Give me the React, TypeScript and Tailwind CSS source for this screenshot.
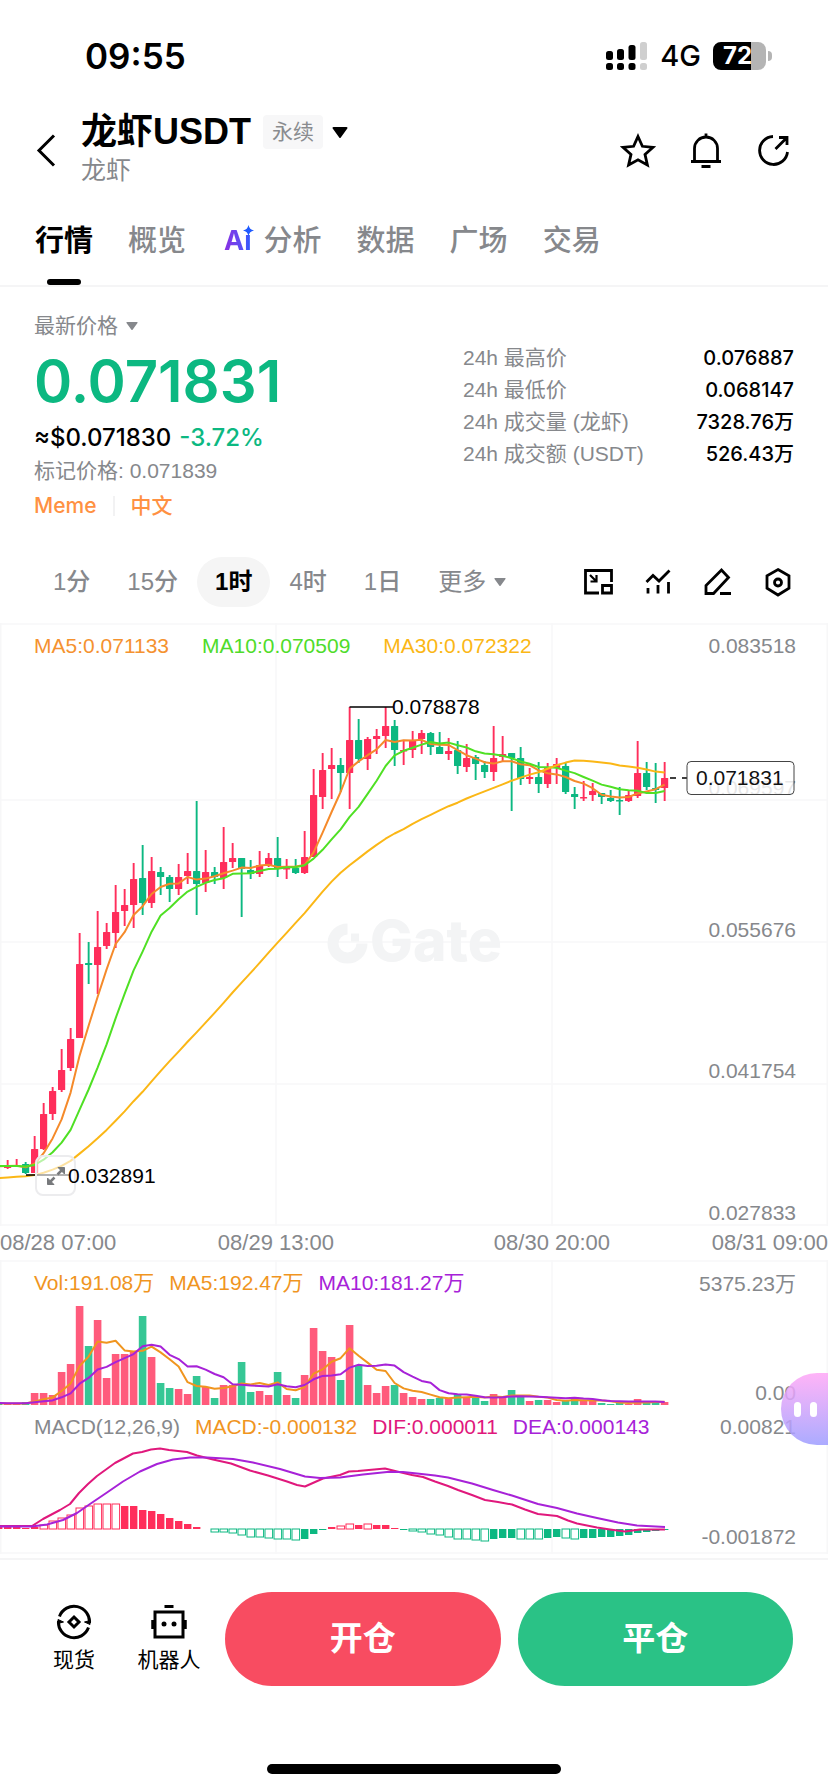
import type { ReactNode } from "react";

type Candle = { high: number; top: number; bottom: number; low: number; up: boolean };

const RED = "#ff2e5b";
const GREEN = "#0cb881";
const GRID = "#f7f7f8";
const STEP = 9;

// high, body top, body bottom, low, direction (1 = up)
const rawCandles: [number, number, number, number, 0 | 1][] = [
  [542, 542, 544, 544, 0], [537, 542, 545, 546, 1], [536, 542, 543, 543, 1], [539, 541, 550, 551, 0],
  [513, 526, 550, 550, 1], [480, 491, 526, 527, 1], [464, 468, 491, 497, 1], [426, 447, 467, 469, 1],
  [405, 416, 445, 448, 1], [310, 341, 415, 415, 1], [319, 340, 342, 361, 0], [288, 324, 342, 371, 1],
  [300, 309, 323, 326, 1], [262, 289, 310, 325, 1], [266, 282, 288, 303, 1], [240, 256, 282, 305, 1],
  [222, 255, 280, 292, 0], [234, 248, 280, 285, 1], [244, 249, 254, 272, 0], [252, 254, 266, 279, 0],
  [241, 254, 266, 272, 1], [230, 248, 253, 261, 1], [178, 248, 261, 292, 0], [227, 249, 260, 269, 1],
  [244, 249, 254, 261, 0], [204, 239, 255, 266, 1], [220, 235, 239, 245, 1], [235, 235, 246, 294, 0],
  [237, 247, 251, 256, 0], [228, 242, 251, 254, 1], [230, 235, 243, 244, 1], [214, 235, 246, 254, 0],
  [236, 245, 246, 256, 1], [236, 245, 250, 251, 0], [208, 234, 250, 251, 1], [146, 172, 234, 234, 1],
  [130, 147, 174, 186, 1], [125, 142, 146, 176, 1], [135, 142, 150, 169, 0], [84, 117, 150, 186, 1],
  [96, 117, 136, 140, 0], [114, 116, 136, 147, 1], [106, 113, 116, 131, 1], [84, 103, 113, 125, 1],
  [97, 103, 127, 143, 0], [117, 127, 128, 142, 1], [108, 117, 127, 135, 1], [107, 110, 116, 131, 1],
  [109, 110, 124, 132, 0], [109, 124, 131, 131, 0], [115, 128, 131, 137, 1], [118, 127, 143, 151, 0],
  [121, 135, 144, 149, 1], [132, 134, 141, 157, 0], [138, 142, 149, 155, 0], [103, 135, 149, 158, 1],
  [113, 131, 134, 139, 1], [130, 130, 135, 188, 0], [124, 135, 156, 162, 0], [145, 154, 156, 161, 1],
  [139, 154, 161, 170, 0], [140, 145, 161, 165, 1], [135, 141, 145, 161, 1], [139, 143, 169, 171, 0],
  [164, 171, 174, 186, 0], [158, 174, 175, 178, 1], [160, 168, 172, 178, 1], [170, 170, 174, 181, 0],
  [167, 175, 178, 179, 0], [164, 177, 178, 192, 0], [168, 172, 178, 179, 1], [118, 150, 173, 175, 1],
  [139, 150, 164, 167, 0], [140, 165, 167, 180, 0], [139, 155, 165, 178, 1],
];

const candles: Candle[] = rawCandles.map(([high, top, bottom, low, up]) => ({
  high, top, bottom, low, up: up === 1,
}));

const volumes = [
  1, 1, 1, 3, 12, 12, 10, 33, 41, 99, 59, 85, 27, 51, 51, 53, 89, 48, 22, 17, 16, 11, 29, 18, 7, 20, 20, 43, 13, 14,
  10, 33, 10, 7, 30, 77, 54, 48, 25, 80, 39, 20, 12, 19, 20, 12, 8, 6, 6, 7, 7, 11, 8, 8, 4, 11, 9, 15, 8, 4, 5, 5, 3,
  4, 8, 4, 4, 2, 1, 2, 1, 6, 3, 3, 3,
];

const histogram = [
  3, 3, 2, 1, 2, 4, 8, 11, 14, 21, 23, 25, 25, 25, 23, 23, 19, 18, 15, 11, 8, 5, 2, 0, -3, -3, -4, -6, -8, -8, -9, -10,
  -10, -11, -10, -5, -1, 2, 3, 5, 4, 5, 4, 4, 1, -1, -2, -3, -5, -6, -8, -10, -10, -11, -12, -10, -9, -9, -10, -10, -10,
  -9, -8, -9, -10, -9, -9, -8, -8, -7, -6, -4, -3, -2, -1,
];
const hollowRanges = [[5, 13], [24, 33], [38, 39], [41, 41], [46, 54], [58, 60], [63, 64]];
const isHollow = (i: number) => hollowRanges.some(([a, b]) => i >= a && i <= b);

const DIF =
  "0,118 32,118 43,111 60,102 70,96 79,85 88,76 97,68 115,55 133,45.5 142,44 151,41.5 160,40.5 169,42 187,44 197,47.5 213,51.5 231,55.5 250,62.5 268,67.5 287,73.5 297,77 305,78.5 314,74.5 323,70.5 340,67 349,63.5 358,63 385,60.5 397,63.5 412,67 423,69 435,73.5 448,78 458,82 472,87 485,92 498,94 512,96.5 525,101.5 538,106 557,108 568,112.5 577,115.5 597,119.5 610,121.5 625,123.5 640,121.5 665,121.5";
const DEA =
  "0,118.5 32,118.5 47,116.5 63,112 77,105 90,96 107,84.5 123,73.5 140,63.5 157,56 173,51.5 190,49.5 207,49.5 233,51 253,54.5 280,61 305,68.5 320,70 340,69.5 363,66.5 387,64 403,64 417,65.5 435,67.5 448,69.5 472,75.5 493,82 512,87.5 538,96 557,100 577,105.5 597,110 618,114.5 637,117.5 665,119";

const xAt = (i: number) => -1.4 + i * STEP;

function movingAverage(values: number[], history: number[], period: number) {
  const all = [...history, ...values];
  return values.map((_, i) => {
    const end = history.length + i + 1;
    return all.slice(end - period, end).reduce((a, b) => a + b, 0) / period;
  });
}

const toPoints = (ys: number[]) => ys.map((y, i) => `${xAt(i)},${y.toFixed(1)}`).join(" ");

const closes = candles.map((c) => (c.up ? c.top : c.bottom));
const closeHistory = [...Array(20).fill(562), ...Array(10).fill(543)];
const volHistory = Array(10).fill(2);

const tabs = ["行情", "概览", "分析", "数据", "广场", "交易"];
const intervals = ["1分", "15分", "1时", "4时", "1日"];
const stats = [
  ["24h 最高价", "0.076887"],
  ["24h 最低价", "0.068147"],
  ["24h 成交量 (龙虾)", "7328.76万"],
  ["24h 成交额 (USDT)", "526.43万"],
];

function Caret({ className }: { className: string }) {
  return (
    <svg viewBox="0 0 16 11" className={className} fill="currentColor" aria-hidden="true">
      <path d="M1.5 0h13a1 1 0 0 1 .8 1.6l-6.5 8.8a1 1 0 0 1-1.6 0L.7 1.6A1 1 0 0 1 1.5 0z" />
    </svg>
  );
}

function Icon({ label, children }: { label: string; children: ReactNode }) {
  return (
    <button type="button" aria-label={label}>
      <svg viewBox="0 0 36 36" className="size-9" fill="none" stroke="#000" strokeWidth="2.800">
        {children}
      </svg>
    </button>
  );
}

function StatusBar() {
  return (
    <div className="flex h-28 items-center justify-between pr-14 pl-[85px] font-['Inter',sans-serif]">
      <span className="text-[35px] font-semibold">09:55</span>
      <div className="flex items-center">
        <svg viewBox="0 0 42 28" className="h-7 w-[42px]">
          <rect x="0" y="9" width="7" height="9" rx="2.5" />
          <rect x="11" y="7" width="7" height="11" rx="2.5" />
          <rect x="22.500" y="3" width="7" height="15" rx="2.5" />
          <rect x="34" y="0" width="7" height="18" rx="2.5" fill="#cfcfcf" />
          <rect x="0" y="21" width="7" height="7" rx="2.5" />
          <rect x="11" y="21" width="7" height="7" rx="2.5" />
          <rect x="22.500" y="21" width="7" height="7" rx="2.5" />
          <rect x="34" y="21" width="7" height="7" rx="2.5" fill="#cfcfcf" />
        </svg>
        <span className="ml-3 text-[29px] font-medium">4G</span>
        <div className="ml-3 flex h-7 w-[53px] items-center rounded-lg bg-linear-to-r from-black from-72% to-[#b4b4b4] to-72% pl-2.5 text-[24px] font-bold text-white">
          72
        </div>
        <div className="ml-0.5 h-2.5 w-1 rounded-r-full bg-[#b4b4b4]" />
      </div>
    </div>
  );
}

function Header() {
  return (
    <header className="flex items-center justify-between pr-9 pl-[35px]">
      <div className="flex items-center">
        <button type="button" aria-label="返回">
          <svg viewBox="0 0 24 36" className="h-9 w-6" fill="none" stroke="#000" strokeWidth="3">
            <path d="M19 3.500 4 18.500l15 15" />
          </svg>
        </button>
        <div className="ml-[22px]">
          <div className="flex items-center">
            <h1 className="text-[36px] leading-10 font-bold">龙虾USDT</h1>
            <span className="ml-3 rounded bg-[#f7f7f8] px-[9px] text-[21px] leading-[34px] text-[#8a8c8f]">永续</span>
            <Caret className="ml-[9px] h-[11px] w-4" />
          </div>
          <p className="text-[25px] leading-9 text-[#86888c]">龙虾</p>
        </div>
      </div>
      <div className="flex gap-8">
        <Icon label="收藏">
          <path d="M18 4.500l4.400 9.800 10.600 1-8 7.100 2.400 10.600-9.400-5.200L8.600 33l2.400-10.600-8-7.100 10.600-1z" />
        </Icon>
        <Icon label="提醒">
          <path d="M6.500 29V16.500a11.500 11.500 0 0 1 23 0V29M3 29.500h30M18 5V1.500M13.500 34.500h9" />
        </Icon>
        <Icon label="分享">
          <path d="M17 4.500A14 14 0 1 0 31.500 20M19.500 17 31 5.500M23 5.500h8V13" />
        </Icon>
      </div>
    </header>
  );
}

function Tabs() {
  return (
    <nav className="flex gap-[35px] border-b-2 border-[#f5f5f6] px-[35px]">
      {tabs.map((tab, i) => (
        <a key={tab} href="#" className="flex flex-col items-center pt-[35px]">
          <span
            className={
              i === 0
                ? "flex items-center text-[29px] leading-9 font-bold text-black"
                : "flex items-center text-[29px] leading-9 font-medium text-[#86888c]"
            }
          >
            {tab === "分析" && <AiBadge />}
            {tab}
          </span>
          {i === 0 && <span className="mt-5 h-1.5 w-[34px] rounded-full bg-black" />}
        </a>
      ))}
    </nav>
  );
}

function AiBadge() {
  return (
    <span className="relative mr-3 ml-[3px] bg-linear-to-r from-[#8a2be2] to-[#1f5bff] bg-clip-text font-['Inter',sans-serif] text-[27px] font-bold text-transparent">
      Aı
      <svg viewBox="0 0 12 12" className="absolute top-0.5 -right-0.5 size-[11px]" fill="#1f5bff">
        <path d="M6 0C6.700 3.500 8.500 5.300 12 6 8.500 6.700 6.700 8.500 6 12 5.300 8.500 3.500 6.700 0 6 3.500 5.300 5.300 3.500 6 0z" />
      </svg>
    </span>
  );
}

function PriceSummary() {
  return (
    <section className="flex justify-between px-[34px]">
      <div className="pt-[25px]">
        <button type="button" className="flex items-center gap-2 text-[21px] leading-7 text-[#86888c]">
          最新价格
          <Caret className="h-2.5 w-3" />
        </button>
        <p className="font-['Inter',sans-serif] text-[58px] leading-[82px] font-semibold text-[#0cb881]">0.071831</p>
        <p className="flex gap-2 font-['Inter',sans-serif] text-[24px] leading-8 font-medium">
          <span>≈$0.071830</span>
          <span className="text-[#0cb881]">-3.72%</span>
        </p>
        <p className="text-[21px] leading-[34px] text-[#86888c]">标记价格: 0.071839</p>
        <p className="flex items-center text-[21px] leading-9 font-medium text-[#ff9142]">
          <a href="#" className="font-['Inter',sans-serif]">Meme</a>
          <span className="mx-4 h-5 w-0.5 bg-[#f2f2f3]" />
          <a href="#">中文</a>
        </p>
      </div>
      <dl className="w-[331px] pt-[55px]">
        {stats.map(([label, value]) => (
          <div key={label} className="flex justify-between text-[21px] leading-8">
            <dt className="text-[#86888c]">{label}</dt>
            <dd className="font-['Inter','Noto_Sans_CJK_SC',sans-serif] text-[20px] font-medium">{value}</dd>
          </div>
        ))}
      </dl>
    </section>
  );
}

function IntervalBar() {
  return (
    <div className="mt-[33px] mb-4 flex items-center justify-between pr-8 pl-[35px]">
      <div className="flex gap-px text-[24px] leading-[50px] text-[#86888c]">
        {intervals.map((label) => (
          <button
            key={label}
            type="button"
            className={
              label === "1时" ? "rounded-full bg-[#f5f5f5] px-[18px] font-bold text-black" : "px-[18px] font-medium"
            }
          >
            {label}
          </button>
        ))}
        <button type="button" className="flex items-center gap-2 pl-[18px]">
          更多
          <Caret className="h-2.5 w-3" />
        </button>
      </div>
      <div className="flex gap-6">
        <Icon label="小窗">
          <path d="M19 29H5.500V6.500h26V18M22.500 21.500h9V29h-9z" />
          <path d="M10 11l6 6M16.500 11v6.500H10.500" strokeWidth="2.200" />
        </Icon>
        <Icon label="指标">
          <path d="M6.500 18l6.500-6.500 6 5.500L29.500 6.500M8 24v5.500M18 21v8.500M28.500 18v11.500" />
        </Icon>
        <Icon label="画线">
          <path d="M6 29.500v-8L21.500 6l7 7.500L13.500 29.500zM20 29.500h11" />
        </Icon>
        <Icon label="设置">
          <path d="M18 5.500l11 6.200v12.600L18 31 7 24.300V11.700z" />
          <circle cx="18" cy="18.500" r="3.500" />
        </Icon>
      </div>
    </div>
  );
}

function Legend({ items, className }: { items: [string, string][]; className: string }) {
  return (
    <div className={className}>
      {items.map(([text, color]) => (
        <span key={text} className={color}>{text}</span>
      ))}
    </div>
  );
}

function VerticalGrid({ height }: { height: number }) {
  return (
    <g stroke={GRID} strokeWidth="1.500">
      {[0.75, 276, 552, 827.25].map((x) => (
        <line key={x} x1={x} x2={x} y1="0" y2={height} />
      ))}
    </g>
  );
}

function AxisLabel({ y, children }: { y: number; children: ReactNode }) {
  return (
    <text x="796" y={y + 7} textAnchor="end" fontSize="21" fill="#86888c">{children}</text>
  );
}

function CandlePane() {
  return (
    <div className="relative">
      <svg viewBox="0 0 828 603" className="block w-full">
        <VerticalGrid height={603} />
        {[1, 177, 319, 461, 602].map((y) => (
          <line key={y} x1="0" x2="828" y1={y} y2={y} stroke={GRID} strokeWidth="1.500" />
        ))}
        <g fill="none" stroke="#f3f4f5" strokeWidth="11">
          <path d="M347.500 306a14.500 14.500 0 1 0 14.500 14.500" />
          <path d="M351 314.500h8" strokeWidth="8" />
        </g>
        <text x="370" y="338" fontSize="57" fontWeight="800" fill="#f3f4f5" className="font-['Inter',sans-serif]">
          Gate
        </text>

        {candles.map((c, i) => (
          <g key={i} fill={c.up ? RED : GREEN}>
            <rect x={xAt(i) - 0.9} y={c.high} width="1.900" height={c.low - c.high} />
            <rect x={xAt(i) - 3.6} y={c.top} width="7.200" height={Math.max(c.bottom - c.top, 1.5)} rx="0.500" />
          </g>
        ))}
        <g fill="none" strokeWidth="2" strokeLinejoin="round">
          <polyline points={toPoints(movingAverage(closes, closeHistory, 5))} stroke="#f58a2a" />
          <polyline points={toPoints(movingAverage(closes, closeHistory, 10))} stroke="#4fe024" />
          <polyline points={toPoints(movingAverage(closes, closeHistory, 30))} stroke="#fbb716" />
        </g>

        <g stroke="#000" strokeWidth="1.500">
          <path d="M349.500 84H393M26 552h43" />
          <path d="M670 155h6M682 155h5" />
        </g>
        <text x="392" y="91" fontSize="21">0.078878</text>
        <AxisLabel y={23}>0.083518</AxisLabel>
        <AxisLabel y={165}>0.069597</AxisLabel>
        <AxisLabel y={307}>0.055676</AxisLabel>
        <AxisLabel y={448}>0.041754</AxisLabel>
        <AxisLabel y={590}>0.027833</AxisLabel>
        <rect x="687" y="138.500" width="107" height="33" rx="4" fill="#fff" fillOpacity="0.800" stroke="#444" />
        <text x="696" y="162" fontSize="21" fill="#111">0.071831</text>
      </svg>
      <Legend
        className="absolute top-[7px] left-[34px] flex gap-[33px] text-[21px] leading-8"
        items={[
          ["MA5:0.071133", "text-[#f5922f]"],
          ["MA10:0.070509", "text-[#4fdc2a]"],
          ["MA30:0.072322", "text-[#fbb716]"],
        ]}
      />
      <div className="absolute bottom-[30px] left-[35px] flex items-center">
        <button
          type="button"
          aria-label="全屏"
          className="flex size-[41px] items-center justify-center rounded-lg border-2 border-[#ececee] bg-white/60"
        >
          <svg viewBox="0 0 20 20" className="size-5" fill="#77797c" stroke="#77797c" strokeWidth="2.500">
            <path d="M11.500 8.500 17 3M8.500 11.500 3 17" />
            <path d="M12 1.500h6.500V8zM1.500 12v6.500H8z" strokeWidth="1" />
          </svg>
        </button>
        <span className="-ml-2 text-[21px] leading-8">0.032891</span>
      </div>
    </div>
  );
}

function TimeAxis() {
  return (
    <div className="flex h-[34px] items-center text-[22px] leading-8 text-[#86888c]">
      <span className="w-1/6 whitespace-nowrap">08/28 07:00</span>
      <span className="w-1/3 text-center">08/29 13:00</span>
      <span className="w-1/3 text-center">08/30 20:00</span>
      <span className="w-1/6 text-right whitespace-nowrap">08/31 09:00</span>
    </div>
  );
}

function VolumePane() {
  const base = 145;
  return (
    <div className="relative">
      <svg viewBox="0 0 828 148" className="block w-full">
        <VerticalGrid height={148} />
        <line x1="0" x2="828" y1="1" y2="1" stroke={GRID} strokeWidth="1.500" />
        {volumes.map((v, i) => (
          <rect key={i} x={xAt(i) - 3.8} y={base - v} width="7.600" height={v} fill={candles[i].up ? "#ff5b7c" : "#36c795"} />
        ))}
        <g fill="none" strokeWidth="2" strokeLinejoin="round">
          <polyline points={toPoints(movingAverage(volumes, volHistory, 5).map((v) => base - v))} stroke="#f0951f" />
          <polyline points={toPoints(movingAverage(volumes, volHistory, 10).map((v) => base - v))} stroke="#a722d8" />
        </g>
        <AxisLabel y={24}>5375.23万</AxisLabel>
        <AxisLabel y={133}>0.00</AxisLabel>
      </svg>
      <Legend
        className="absolute top-[7px] left-[34px] flex gap-[15px] text-[21px] leading-8"
        items={[
          ["Vol:191.08万", "text-[#f0951f]"],
          ["MA5:192.47万", "text-[#f0951f]"],
          ["MA10:181.27万", "text-[#a722d8]"],
        ]}
      />
    </div>
  );
}

function MacdPane() {
  const base = 121;
  return (
    <div className="relative">
      <svg viewBox="0 0 828 150" className="block w-full">
        <VerticalGrid height={146} />
        <line x1="0" x2="828" y1="145" y2="145" stroke={GRID} strokeWidth="1.500" />
        {histogram.map((h, i) => {
          const color = h >= 0 ? RED : GREEN;
          const y = h >= 0 ? base - h : base;
          return isHollow(i) ? (
            <rect key={i} x={xAt(i) - 3.6} y={y} width="7.600" height={Math.abs(h)} fill="#fff" stroke={color} />
          ) : (
            <rect key={i} x={xAt(i) - 3.6} y={y} width="7.400" height={Math.abs(h)} fill={color} />
          );
        })}
        <g fill="none" strokeWidth="2" strokeLinejoin="round">
          <polyline points={DIF} stroke="#e0187c" />
          <polyline points={DEA} stroke="#a722d8" />
        </g>
        <AxisLabel y={19}>0.00821</AxisLabel>
        <AxisLabel y={129}>-0.001872</AxisLabel>
      </svg>
      <Legend
        className="absolute top-[3px] left-[34px] flex gap-[15px] text-[21px] leading-8"
        items={[
          ["MACD(12,26,9)", "text-[#86888c]"],
          ["MACD:-0.000132", "text-[#f0951f]"],
          ["DIF:0.000011", "text-[#e0187c]"],
          ["DEA:0.000143", "text-[#a722d8]"],
        ]}
      />
      {/* Assistant bubble docked to the right edge */}
      <button
        type="button"
        aria-label="助手"
        className="absolute -top-[35px] right-0 flex h-[72px] w-[47px] items-center gap-[9px] rounded-l-full bg-linear-to-b from-[#ffa6f6]/85 to-[#9c9cff]/85 pl-[13px]"
      >
        <span className="h-[15px] w-[7px] rounded-full bg-white" />
        <span className="h-[15px] w-[7px] rounded-full bg-white" />
      </button>
    </div>
  );
}

function BottomBar() {
  return (
    <footer className="border-t-2 border-[#f5f5f6] px-[35px] pt-8 pb-4">
      <div className="flex items-center">
        <a href="#" className="flex w-[78px] flex-col items-center gap-[5px] text-[21px] leading-[30px]">
          <svg viewBox="0 0 36 36" className="size-9" fill="none" stroke="#000" strokeWidth="3">
            <path d="M3.500 12.400A15.500 15.500 0 0 1 33.500 19M32.500 23.600A15.500 15.500 0 0 1 2.500 17" />
            <path d="M18 13l5 5-5 5-5-5z" />
            <path d="M34 20.500l-5.500-2.500 5.500-1.500zM2 15.500l5.500 2.500-5.500 1.500z" fill="#000" strokeWidth="1" />
          </svg>
          现货
        </a>
        <a href="#" className="flex w-28 flex-col items-center gap-[5px] text-[21px] leading-[30px]">
          <svg viewBox="0 0 36 36" className="size-9" fill="none" stroke="#000" strokeWidth="3">
            <path d="M4 8h28v25H4zM13.500 2.500h9" />
            <path d="M2 16v9M34 16v9" strokeWidth="3.500" />
            <circle cx="13" cy="20" r="2.500" fill="#000" stroke="none" />
            <circle cx="23" cy="20" r="2.500" fill="#000" stroke="none" />
          </svg>
          机器人
        </a>
        <div className="flex flex-1 gap-[17px] text-[33px] font-bold text-white">
          <button type="button" className="h-[94px] flex-1 rounded-full bg-[#f84c61]">开仓</button>
          <button type="button" className="h-[94px] flex-1 rounded-full bg-[#2ac286]">平仓</button>
        </div>
      </div>
      <div className="mx-auto mt-[78px] h-2.5 w-[294px] rounded-full bg-black" />
    </footer>
  );
}

export default function App() {
  return (
    <div className="bg-white font-['Liberation_Sans','Noto_Sans_CJK_SC',sans-serif] text-black">
      <StatusBar />
      <Header />
      <Tabs />
      <main>
        <PriceSummary />
        <IntervalBar />
        <CandlePane />
        <TimeAxis />
        <VolumePane />
        <MacdPane />
      </main>
      <BottomBar />
    </div>
  );
}
